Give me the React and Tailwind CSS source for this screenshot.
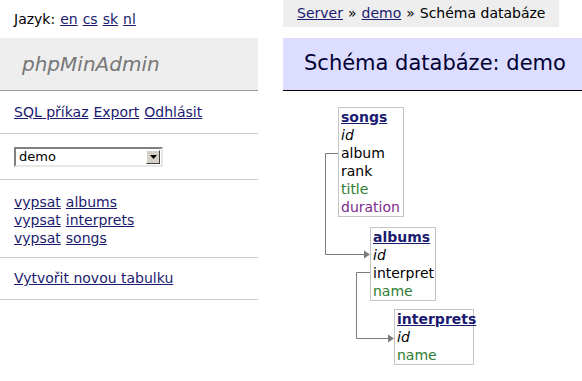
import React from 'react';

const font = { fontFamily: '"DejaVu Sans", Verdana, sans-serif' };

const Link = ({ children }) => (
  <a href="#" className="text-[#1b1b6f] underline">{children}</a>
);

const tables = [
  {
    name: 'songs', left: 55, top: 16, width: 66,
    cols: [
      { n: 'id', c: 'italic text-black' },
      { n: 'album', c: 'text-black' },
      { n: 'rank', c: 'text-black' },
      { n: 'title', c: 'text-[#2e7d32]' },
      { n: 'duration', c: 'text-[#7b2d8b]' },
    ],
  },
  {
    name: 'albums', left: 87, top: 136, width: 66,
    cols: [
      { n: 'id', c: 'italic text-black' },
      { n: 'interpret', c: 'text-black' },
      { n: 'name', c: 'text-[#2e7d32]' },
    ],
  },
  {
    name: 'interprets', left: 111, top: 218, width: 80,
    cols: [
      { n: 'id', c: 'italic text-black' },
      { n: 'name', c: 'text-[#2e7d32]' },
    ],
  },
];

const Table = ({ t }) => (
  <div
    className="absolute border border-[#c4c4c4] bg-white px-[2px] text-[14px] leading-[18px]"
    style={{ left: t.left, top: t.top, width: t.width }}
  >
    <a href="#" className="font-bold text-[#1b1b6f] underline">{t.name}</a>
    {t.cols.map(c => (
      <div key={c.n} className={c.c}>{c.n}</div>
    ))}
  </div>
);

const Schema = () => (
  <div className="relative h-[290px]">
    <svg className="absolute left-0 top-0" width="299" height="290">
      <g stroke="#7a7a7a" strokeWidth="1" fill="none">
        <polyline points="55.5,62.5 42.5,62.5 42.5,163.5 81,163.5" />
        <polyline points="87.5,181.5 73.5,181.5 73.5,247.5 105,247.5" />
      </g>
      <polygon points="81,159.5 87,163.5 81,167.5" fill="#7a7a7a" />
      <polygon points="105,243.5 111,247.5 105,251.5" fill="#7a7a7a" />
    </svg>
    {tables.map(t => <Table key={t.name} t={t} />)}
  </div>
);

const Select = () => (
  <div className="flex h-[20px] w-[149px] items-center border-2 border-t-[#808080] border-l-[#808080] border-b-[#e8e8e8] border-r-[#e8e8e8] bg-white">
    <span className="flex-1 pl-[3px] text-[13px] leading-[16px] text-black">demo</span>
    <span className="mr-[1px] flex h-[14px] w-[14px] items-center justify-center border border-t-white border-l-white border-b-[#404040] border-r-[#404040] bg-[#d4d0c8]">
      <svg width="7" height="4" viewBox="0 0 7 4"><polygon points="0,0 7,0 3.5,4" fill="#000" /></svg>
    </span>
  </div>
);

export default function App() {
  return (
    <div className="flex h-[381px] w-[582px] overflow-hidden bg-white text-[14px] text-black" style={font}>
      <div className="w-[258px] shrink-0">
        <div className="flex h-[38px] items-center gap-[5px] pl-[14px]">
          <span>Jazyk:</span>
          <Link>en</Link><Link>cs</Link><Link>sk</Link><Link>nl</Link>
        </div>
        <div className="flex h-[53px] items-center border-b border-[#9a9a9a] bg-[#eeeeee] pl-[22px]">
          <span className="text-[20px] italic text-[#777777]">phpMinAdmin</span>
        </div>
        <div className="flex h-[43px] items-center gap-[5px] border-b border-[#cccccc] pl-[14px]">
          <Link>SQL příkaz</Link><Link>Export</Link><Link>Odhlásit</Link>
        </div>
        <div className="flex h-[46px] items-center border-b border-[#cccccc] pl-[14px]">
          <Select />
        </div>
        <div className="h-[78px] border-b border-[#cccccc] pl-[14px] pt-[13px] leading-[18px]">
          {['albums', 'interprets', 'songs'].map(n => (
            <div key={n} className="flex gap-[5px]"><Link>vypsat</Link><Link>{n}</Link></div>
          ))}
        </div>
        <div className="flex h-[42px] items-center border-b border-[#cccccc] pl-[14px]">
          <Link>Vytvořit novou tabulku</Link>
        </div>
      </div>

      <div className="ml-[25px] flex-1">
        <div className="inline-flex h-[27px] items-center gap-[5px] bg-[#eeeeee] px-[14px]">
          <Link>Server</Link><span>»</span><Link>demo</Link><span>»</span><span>Schéma databáze</span>
        </div>
        <div className="mt-[11px] flex h-[53px] items-center border-b border-black bg-[#ddddff] pl-[21px]">
          <h2 className="text-[21px] font-normal text-[#000033]">Schéma databáze: demo</h2>
        </div>
        <Schema />
      </div>
    </div>
  );
}
